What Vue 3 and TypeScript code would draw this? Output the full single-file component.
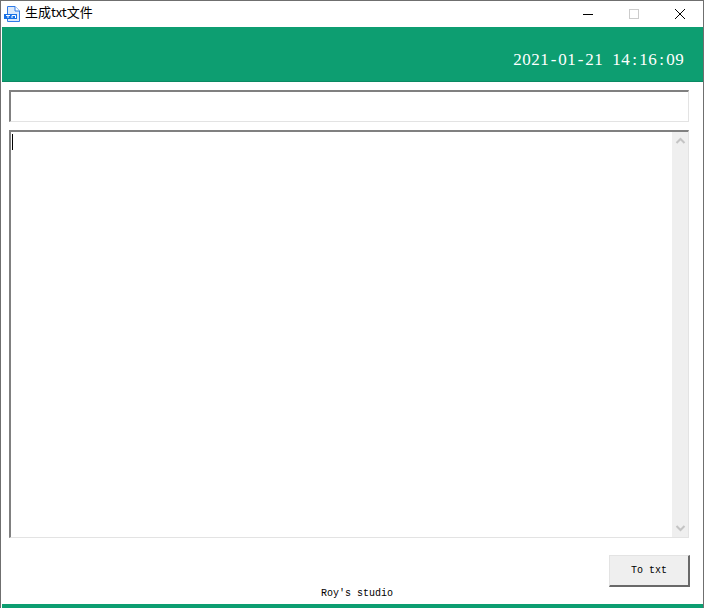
<script setup lang="ts">
const title = "生成txt文件";
const clock = "2021-01-21 14:16:09";
const cells = (text: string): string[] => Array.from(text);
</script>

<template>
  <div class="window">
    <header class="titlebar">
      <div class="title-left">
        <svg class="app-icon" width="17" height="17" viewBox="0 0 17 17">
          <path d="M3.5 .5H11L15.5 5V15.5H3.5Z" fill="#dbe9fb" stroke="#2f7be8" />
          <path d="M11 .5V5H15.5" fill="#fff" stroke="#2f7be8" />
          <rect x="0" y="8" width="13" height="5" fill="#1670e6" />
          <path d="M2 9.5H6M4 9.5V12M8 9.5H11.5V12M8 9.5V12" stroke="#fff" fill="none" />
        </svg>
        <span class="title-text">{{ title }}</span>
      </div>
      <div class="controls">
        <button class="ctrl" aria-label="minimize">
          <svg width="12" height="12" viewBox="0 0 12 12"><path d="M1 6.5H11" stroke="#000" /></svg>
        </button>
        <button class="ctrl" aria-label="maximize">
          <svg width="12" height="12" viewBox="0 0 12 12"><rect x="1.5" y="1.5" width="9" height="9" fill="none" stroke="#ccc" /></svg>
        </button>
        <button class="ctrl" aria-label="close">
          <svg width="12" height="12" viewBox="0 0 12 12"><path d="M1 1L11 11M11 1L1 11" stroke="#000" /></svg>
        </button>
      </div>
    </header>

    <section class="banner">
      <span class="clock"><span v-for="(c, i) in cells(clock)" :key="i">{{ c }}</span></span>
    </section>

    <main class="content">
      <div class="sunken single"></div>
      <div class="sunken multi">
        <div class="text-area"><i class="caret"></i></div>
        <div class="scrollbar">
          <svg width="11" height="8" viewBox="0 0 11 8"><path d="M1.5 6L5.5 2L9.5 6" fill="none" stroke="#c4c4c4" stroke-width="2" /></svg>
          <svg width="11" height="8" viewBox="0 0 11 8"><path d="M1.5 2L5.5 6L9.5 2" fill="none" stroke="#c4c4c4" stroke-width="2" /></svg>
        </div>
      </div>
      <div class="actions">
        <button class="to-txt">To txt</button>
      </div>
    </main>

    <footer class="footer">
      <span class="studio">Roy's studio</span>
      <div class="footer-bar"></div>
    </footer>
  </div>
</template>

<style>
html, body { margin: 0; background: #fff; overflow: hidden; }
</style>

<style scoped>
.window {
  box-sizing: border-box;
  width: 704px;
  height: 608px;
  display: flex;
  flex-direction: column;
  background: #fff;
  border-top: 1px solid #6f6f6f;
  border-left: 1px solid #6f6f6f;
  border-right: 1px solid #6f6f6f;
}
.titlebar {
  height: 26px;
  display: flex;
  justify-content: space-between;
  align-items: center;
  flex: none;
}
.title-left { display: flex; align-items: center; padding-left: 3px; gap: 4px; }
.app-icon { display: block; }
.title-text {
  font: 13px/20px "Noto Sans CJK SC", "Liberation Sans", sans-serif;
  color: #000;
  position: relative;
  top: -2px;
}
.controls { display: flex; align-items: center; height: 26px; }
.ctrl {
  width: 46px;
  height: 26px;
  padding: 0;
  border: 0;
  background: none;
  display: flex;
  align-items: center;
  justify-content: center;
}
.banner {
  flex: none;
  height: 55px;
  margin-left: 1px;
  background: #0d9e71;
  border-bottom: 1px solid #0b8a63;
  box-sizing: border-box;
  display: flex;
  justify-content: flex-end;
  align-items: center;
  padding: 12px 19px 0 0;
}
.clock {
  font: 17px/20px "Liberation Serif", serif;
  white-space: pre;
  color: #fff;
}
.clock span { display: inline-block; width: 9px; text-align: center; }
.content {
  flex: 1;
  min-height: 0;
  display: flex;
  flex-direction: column;
  padding: 8px 13px 0 8px;
}
.sunken {
  box-sizing: border-box;
  background: #fff;
  margin-right: 1px;
  border-top: 2px solid #808080;
  border-left: 2px solid #808080;
  border-right: 1px solid #e3e3e3;
  border-bottom: 1px solid #e3e3e3;
}
.single { height: 32px; flex: none; }
.multi {
  height: 408px;
  flex: none;
  margin-top: 8px;
  display: flex;
}
.text-area { flex: 1; padding: 2px 0 0 1px; }
.caret { display: block; width: 1px; height: 16px; background: #000; }
.scrollbar {
  width: 16px;
  background: #efefef;
  display: flex;
  flex-direction: column;
  justify-content: space-between;
  align-items: center;
  padding: 5px 0;
  box-sizing: border-box;
}
.scrollbar svg { display: block; }
.actions { display: flex; justify-content: flex-end; margin-top: 17px; }
.to-txt {
  box-sizing: border-box;
  width: 81px;
  height: 32px;
  padding: 0;
  background: #efefef;
  border-top: 1px solid #e3e3e3;
  border-left: 1px solid #e3e3e3;
  border-right: 2px solid #696969;
  border-bottom: 2px solid #696969;
  font: 10px/14px "Liberation Mono", monospace;
  color: #000;
}
.footer {
  margin-top: auto;
  display: flex;
  flex-direction: column;
  align-items: center;
  flex: none;
}
.studio {
  font: 10px/14px "Liberation Mono", monospace;
  color: #000;
  margin: 0 0 3px 10px;
}
.footer-bar { width: calc(100% - 1px); margin-left: 1px; height: 4px; background: #0d9e71; }
</style>
